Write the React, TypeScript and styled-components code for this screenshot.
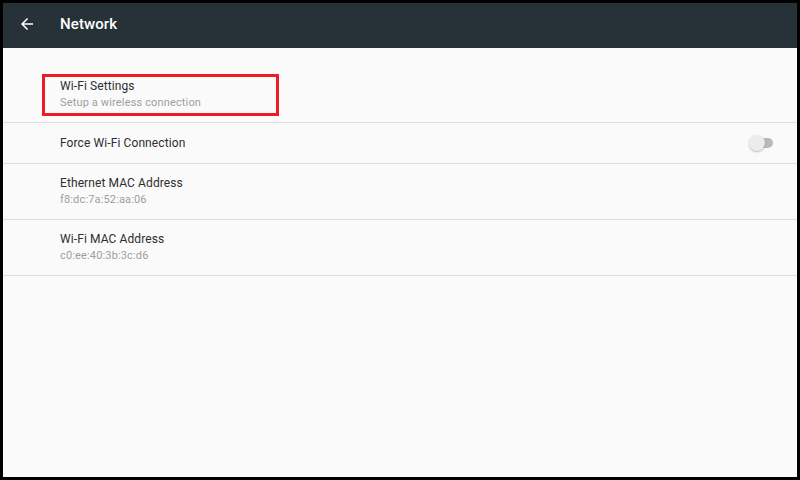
import styled, { createGlobalStyle } from 'styled-components'

const GlobalStyle = createGlobalStyle`
  html, body {
    margin: 0;
    padding: 0;
    background: #000;
  }
  * {
    box-sizing: border-box;
  }
`

const Screen = styled.div`
  width: 800px;
  height: 480px;
  border: 3px solid #000;
  background: #fafafa;
  display: flex;
  flex-direction: column;
  font-family: Roboto, 'Liberation Sans', sans-serif;
  overflow: hidden;
`

const AppBar = styled.div`
  height: 45px;
  flex-shrink: 0;
  background: #263238;
  display: flex;
  align-items: center;
  padding: 0 0 3px 15px;
`

const BackButton = styled.button`
  width: 18px;
  height: 18px;
  padding: 0;
  border: none;
  background: none;
  display: flex;
  align-items: center;
  justify-content: center;
  margin-right: 24px;
  cursor: pointer;
`

const Title = styled.h1`
  margin: 0;
  color: #fff;
  font-size: 15px;
  font-weight: 500;
  letter-spacing: 0.1px;
`

const List = styled.div`
  padding-top: 19px;
  display: flex;
  flex-direction: column;
`

const Row = styled.div<{ $tall?: boolean }>`
  position: relative;
  height: ${(p) => (p.$tall ? '56px' : '41px')};
  border-bottom: 1px solid #dedede;
  display: flex;
  align-items: center;
  justify-content: space-between;
  padding: 0 24px 0 57px;
`

const TextBlock = styled.div`
  display: flex;
  flex-direction: column;
`

const RowTitle = styled.div`
  color: #2e2e2e;
  font-size: 12px;
  line-height: 16px;
  letter-spacing: 0.1px;
`

const RowSub = styled.div`
  color: #9e9e9e;
  font-size: 11px;
  line-height: 16px;
  margin-top: 1px;
  letter-spacing: 0.15px;
`

const Highlight = styled.div`
  position: absolute;
  left: 39px;
  top: 7px;
  width: 237px;
  height: 42px;
  border: 3px solid #ed1c24;
  pointer-events: none;
`

const Switch = styled.div`
  position: relative;
  width: 24px;
  height: 16px;
`

const Track = styled.div`
  position: absolute;
  right: 0;
  top: 3px;
  width: 20px;
  height: 10px;
  border-radius: 5px;
  background: #b9b9b9;
`

const Thumb = styled.div`
  position: absolute;
  left: 0;
  top: 0;
  width: 16px;
  height: 16px;
  border-radius: 50%;
  background: #ececec;
  box-shadow: 0 1px 2px rgba(0, 0, 0, 0.25);
`

const BackArrow = () => (
  <svg width="18" height="18" viewBox="0 0 24 24">
    <path d="M20 11H7.83l5.59-5.59L12 4l-8 8 8 8 1.41-1.41L7.83 13H20v-2z" fill="#fff" />
  </svg>
)

export default function App() {
  return (
    <>
      <GlobalStyle />
      <Screen>
        <AppBar>
          <BackButton aria-label="Back">
            <BackArrow />
          </BackButton>
          <Title>Network</Title>
        </AppBar>
        <List>
          <Row $tall>
            <TextBlock>
              <RowTitle>Wi-Fi Settings</RowTitle>
              <RowSub>Setup a wireless connection</RowSub>
            </TextBlock>
            <Highlight />
          </Row>
          <Row>
            <RowTitle>Force Wi-Fi Connection</RowTitle>
            <Switch>
              <Track />
              <Thumb />
            </Switch>
          </Row>
          <Row $tall>
            <TextBlock>
              <RowTitle>Ethernet MAC Address</RowTitle>
              <RowSub>f8:dc:7a:52:aa:06</RowSub>
            </TextBlock>
          </Row>
          <Row $tall>
            <TextBlock>
              <RowTitle>Wi-Fi MAC Address</RowTitle>
              <RowSub>c0:ee:40:3b:3c:d6</RowSub>
            </TextBlock>
          </Row>
        </List>
      </Screen>
    </>
  )
}
